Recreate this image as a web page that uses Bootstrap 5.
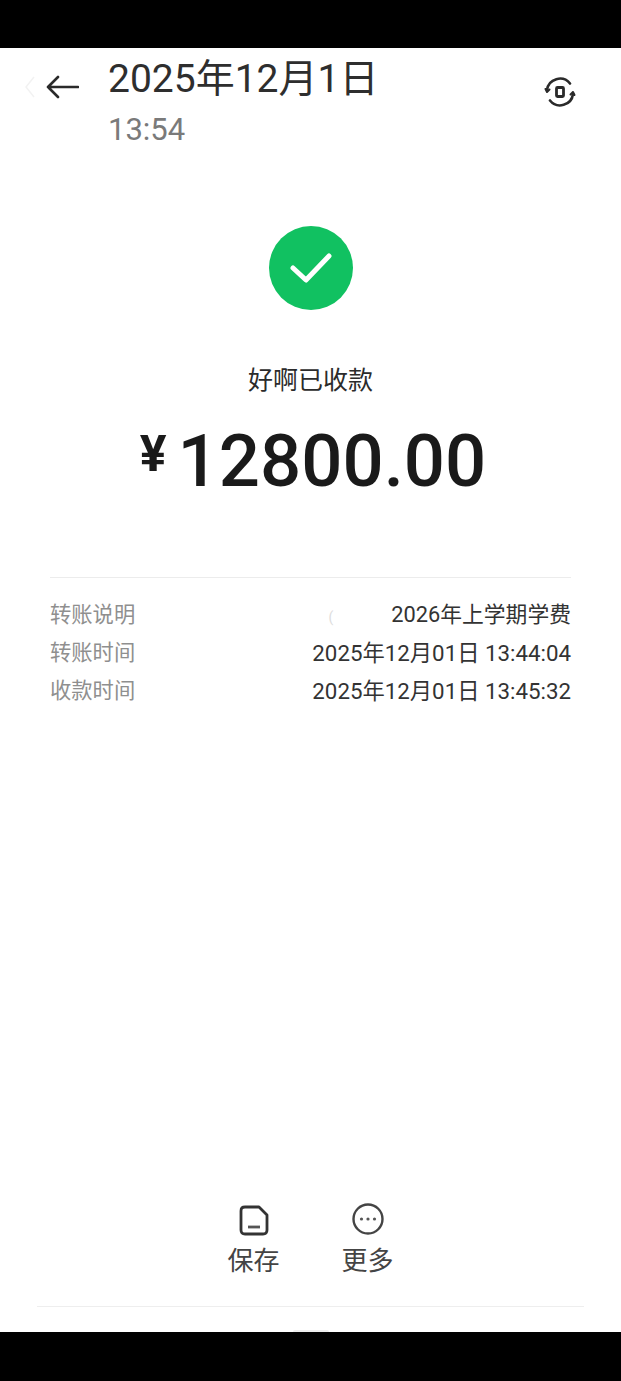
<!DOCTYPE html>
<html lang="zh-CN">
<head>
    <meta charset="UTF-8">
    <meta name="viewport" content="width=device-width, initial-scale=1.0">
    <title>转账详情</title>
    <link rel="stylesheet" href="https://cdn.jsdelivr.net/npm/bootstrap@5.3.0/dist/css/bootstrap.min.css">
    <style>
        body {
            background: #000;
            font-family: Roboto, "Noto Sans CJK SC", sans-serif;
            color: #1c1c1c;
        }
        .phone-screen {
            margin-top: 48px;
            height: 1284px;
            background: #fff;
            overflow: hidden;
        }
        .top-bar {
            height: 110px;
            padding-left: 25px;
            padding-right: 45px;
        }
        .back-icon { margin-top: 21px; }
        .date-box { margin-left: 29px; margin-top: 1px; }
        .date-main {
            font-size: 39px;
            line-height: 60px;
            color: #2e2e2e;
        }
        .date-time {
            font-size: 31px;
            line-height: 40px;
            color: #7a7a7a;
            margin-top: 1px;
        }
        .swap-icon { margin-top: 28px; }
        .ok-circle {
            width: 84px;
            height: 84px;
            margin-top: 68px;
            background: #11c161;
        }
        .status-text {
            font-size: 25px;
            line-height: 36px;
            margin-top: 53px;
            color: #2b2b2b;
        }
        .amount-line {
            margin-top: 17px;
            height: 92px;
            font-size: 72.5px;
            line-height: 92px;
            font-weight: 500;
            color: #1a1a1a;
            padding-left: 5px;
        }
        .yen-mark {
            font-size: 50px;
            line-height: 50px;
            font-weight: 700;
            margin-right: 11px;
            margin-top: 13px;
        }
        .detail-box {
            margin: 69px 50px 0;
            padding-top: 18px;
            border-top: 1px solid #ececec;
        }
        .detail-row {
            height: 38px;
            line-height: 38px;
            font-size: 22.3px;
            color: #333;
        }
        .detail-label {
            font-size: 21.3px;
            color: #8f8f8f;
        }
        .note-value { font-size: 21.8px; }
        .ghost-mark { color: #ddd; font-size: 14px; margin-right: 58px; }
        .bottom-actions {
            margin-top: 492px;
            gap: 62px;
        }
        .action-item {
            width: 52px;
            font-size: 26px;
            line-height: 36px;
            color: #444;
        }
        .action-item svg { display: block; height: 36px; margin-bottom: 5px; }
        .bottom-rule {
            margin: 27px 37px 0;
            border-top: 1px solid #eee;
        }
        .home-hint {
            width: 36px;
            height: 2px;
            margin-top: auto;
            background: #eee;
        }
    </style>
</head>
<body>
    <div class="phone-screen d-flex flex-column">
        <div class="top-bar d-flex align-items-start flex-shrink-0">
            <svg class="back-icon" width="54" height="36" viewBox="0 0 54 36" fill="none">
                <path d="M9 8 L1 18 L9 28" stroke="#f2f2f2" stroke-width="1.5"/>
                <path d="M23 18 H53 M33 8 L23 18 L33 28" stroke="#2a2a2a" stroke-width="2.6" stroke-linecap="round" stroke-linejoin="round"/>
            </svg>
            <div class="date-box flex-grow-1">
                <div class="date-main">2025年12月1日</div>
                <div class="date-time">13:54</div>
            </div>
            <svg class="swap-icon" width="32" height="32" viewBox="0 0 32 32" fill="none">
                <path d="M3 14 A13 13 0 0 1 26 7.5 M29 18 A13 13 0 0 1 6 24.5" stroke="#2a2a2a" stroke-width="2.6" stroke-linecap="round"/>
                <path d="M1.5 13 L3 16 L5.5 13.5 M30.5 19 L29 16 L26.5 18.5" stroke="#2a2a2a" stroke-width="2" stroke-linejoin="round" stroke-linecap="round"/>
                <rect x="12.5" y="11.5" width="7" height="9" rx="1" stroke="#2a2a2a" stroke-width="2.8"/>
            </svg>
        </div>

        <div class="d-flex flex-column align-items-center">
            <div class="ok-circle rounded-circle d-flex align-items-center justify-content-center">
                <svg width="44" height="34" viewBox="0 0 44 34" fill="none">
                    <path d="M4 17 L17 29 L40 5" stroke="#fff" stroke-width="5" stroke-linecap="round" stroke-linejoin="round"/>
                </svg>
            </div>
            <div class="status-text">好啊已收款</div>
            <div class="amount-line d-flex align-items-start">
                <span class="yen-mark">¥</span>
                <span>12800.00</span>
            </div>
        </div>

        <div class="detail-box">
            <div class="detail-row d-flex justify-content-between">
                <span class="detail-label">转账说明</span>
                <span class="note-value"><span class="ghost-mark">(</span>2026年上学期学费</span>
            </div>
            <div class="detail-row d-flex justify-content-between">
                <span class="detail-label">转账时间</span>
                <span>2025年12月01日 13:44:04</span>
            </div>
            <div class="detail-row d-flex justify-content-between">
                <span class="detail-label">收款时间</span>
                <span>2025年12月01日 13:45:32</span>
            </div>
        </div>

        <div class="bottom-actions d-flex justify-content-center">
            <div class="action-item text-center">
                <svg class="mx-auto" width="30" height="36" viewBox="0 0 30 36" fill="none">
                    <path d="M6 5 H20 L28 13 V28 Q28 32 24 32 H6 Q2 32 2 28 V9 Q2 5 6 5 Z" stroke="#333" stroke-width="2.8" stroke-linejoin="round"/>
                    <path d="M9 25 H21" stroke="#555" stroke-width="2.8"/>
                </svg>
                保存
            </div>
            <div class="action-item text-center">
                <svg class="mx-auto" width="32" height="36" viewBox="0 0 32 36" fill="none">
                    <circle cx="16" cy="17" r="14.5" stroke="#444" stroke-width="2.4"/>
                    <circle cx="9.5" cy="17" r="1.6" fill="#555"/>
                    <circle cx="16" cy="17" r="1.6" fill="#555"/>
                    <circle cx="22.5" cy="17" r="1.6" fill="#555"/>
                </svg>
                更多
            </div>
        </div>
        <div class="bottom-rule"></div>
        <div class="home-hint rounded-top mx-auto"></div>
    </div>

    <script src="https://cdn.jsdelivr.net/npm/bootstrap@5.3.0/dist/js/bootstrap.bundle.min.js"></script>
</body>
</html>
